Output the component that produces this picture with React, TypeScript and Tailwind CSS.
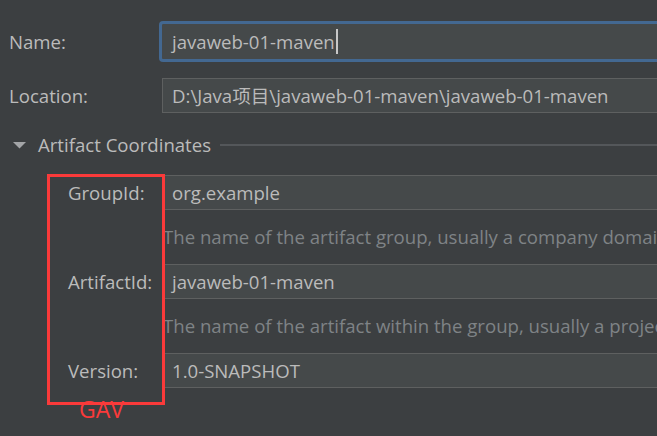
import React from "react";

const font = { fontFamily: '"Open Sans", "Noto Sans CJK SC", sans-serif' };

function Field({ value }: { value: string }) {
  return (
    <div className="flex h-[35px] flex-1 items-center border-y border-l border-[#5e6060] bg-[#45494a] pl-[9px] text-[#bbbbbb] whitespace-nowrap overflow-hidden">
      {value}
    </div>
  );
}

function Hint({ text }: { text: string }) {
  return (
    <div className="flex h-[54px] items-center pl-[163px] text-[#7f8386] whitespace-nowrap">
      {text}
    </div>
  );
}

export default function App() {
  return (
    <div
      className="relative h-[436px] w-[657px] overflow-hidden bg-[#3c3f41] text-[18.6px] text-[#bbbbbb]"
      style={font}
    >
      <div className="pt-[21px]">
        {/* Name */}
        <div className="flex items-center">
          <div className="w-[159px] pl-[9px]">Name:</div>
          <div className="flex h-[41px] flex-1 items-center rounded-l-[4px] border-y-[3px] border-l-[3px] border-[#436891] bg-[#45494a] pl-[10px] whitespace-nowrap">
            javaweb-01-maven
            <span className="ml-[1px] inline-block h-[25px] w-[2px] bg-[#c8c8c8]" />
          </div>
        </div>

        {/* Location */}
        <div className="mt-[16px] flex items-center">
          <div className="w-[162px] pl-[9px]">Location:</div>
          <Field value="D:\Java项目\javaweb-01-maven\javaweb-01-maven" />
        </div>

        {/* Artifact Coordinates */}
        <div className="mt-[20px] flex h-[24px] items-center">
          <svg width="13" height="7" viewBox="0 0 13 7" className="ml-[13px]">
            <polygon points="0,0 13,0 6.5,6.5" fill="#a3a5a7" />
          </svg>
          <span className="ml-[12px]">Artifact Coordinates</span>
          <div className="ml-[9px] h-[2px] flex-1 bg-[#54575a]" />
        </div>

        {/* GroupId */}
        <div className="mt-[18px] flex items-center">
          <div className="w-[162px] pl-[68px]">GroupId:</div>
          <Field value="org.example" />
        </div>
        <Hint text="The name of the artifact group, usually a company domain" />

        {/* ArtifactId */}
        <div className="flex items-center">
          <div className="w-[162px] pl-[68px]">ArtifactId:</div>
          <Field value="javaweb-01-maven" />
        </div>
        <Hint text="The name of the artifact within the group, usually a project name" />

        {/* Version */}
        <div className="flex items-center">
          <div className="w-[162px] pl-[68px]">Version:</div>
          <Field value="1.0-SNAPSHOT" />
        </div>
      </div>

      {/* GAV annotation */}
      <div className="pointer-events-none absolute left-[47px] top-[174px] h-[231px] w-[118px] border-[3px] border-[#fa3a3a]" />
      <div className="absolute left-[79px] top-[394px] text-[23px] leading-[30px] text-[#fa3a3a]">GAV</div>
    </div>
  );
}
